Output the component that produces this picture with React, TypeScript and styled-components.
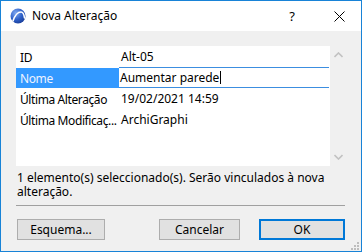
import React from "react"
import styled, { createGlobalStyle } from "styled-components"

/////////////////////////////////////////////////////////////////////////////

const GlobalStyle = createGlobalStyle`
  html, body {
    margin: 0;
    padding: 0;
    background: #ffffff;
  }
  * {
    box-sizing: border-box;
  }
`

const FONT = `"Noto Sans", "Liberation Sans", Arial, sans-serif`

interface RowData {
  label: string
  value: string
  editing?: boolean
}

const ROWS: RowData[] = [
  { label: "ID", value: "Alt-05" },
  { label: "Nome", value: "Aumentar parede", editing: true },
  { label: "Última Alteração", value: "19/02/2021 14:59" },
  { label: "Última Modificaç...", value: "ArchiGraphi" },
]

const AppLogo: React.FC = () => (
  <svg width="16" height="16" viewBox="0 0 16 16">
    <defs>
      <radialGradient id="lg" cx="35%" cy="30%" r="75%">
        <stop offset="0%" stopColor="#7fa8f0" />
        <stop offset="60%" stopColor="#2d5fc8" />
        <stop offset="100%" stopColor="#1b3f9a" />
      </radialGradient>
    </defs>
    <circle cx="8" cy="8" r="7.5" fill="url(#lg)" />
    <path d="M3 13 C5 7 8 4 11 4 C13 4 14 6 14.5 10" fill="none" stroke="#ffffff" strokeWidth="1.6" strokeLinecap="round" />
  </svg>
)

const CloseIcon: React.FC = () => (
  <svg width="11" height="11" viewBox="0 0 11 11">
    <path d="M0.5 0.5 L10.5 10.5 M10.5 0.5 L0.5 10.5" stroke="#000" strokeWidth="1" />
  </svg>
)

const Chevron: React.FC<{ down?: boolean }> = ({ down }) => (
  <svg width="9" height="6" viewBox="0 0 9 6">
    <path d={down ? "M0.5 1 L4.5 5 L8.5 1" : "M0.5 5 L4.5 1 L8.5 5"} fill="none" stroke="#c2c2c2" strokeWidth="1.6" />
  </svg>
)

const App: React.FC = () => {
  return (
    <>
      <GlobalStyle />
      <Window>
        <TitleBar>
          <LogoWrap>
            <AppLogo />
          </LogoWrap>
          <Title>Nova Alteração</Title>
          <HelpButton>?</HelpButton>
          <CloseButton>
            <CloseIcon />
          </CloseButton>
        </TitleBar>
        <Body>
          <Panel>
            <List>
              {ROWS.map((row) => (
                <Row key={row.label}>
                  <Label selected={row.editing}>{row.label}</Label>
                  {row.editing ? (
                    <EditCell>
                      {row.value}
                      <Caret />
                    </EditCell>
                  ) : (
                    <Value>{row.value}</Value>
                  )}
                </Row>
              ))}
            </List>
            <ScrollBar>
              <Chevron />
              <Chevron down />
            </ScrollBar>
          </Panel>
          <Message>
            <Line>1 elemento(s) seleccionado(s). Serão vinculados à nova</Line>
            <Line>alteração.</Line>
          </Message>
          <Separator />
          <ButtonRow>
            <Button width={88}>Esquema...</Button>
            <Spacer />
            <Button width={81}>Cancelar</Button>
            <Button width={86} primary>
              OK
            </Button>
          </ButtonRow>
          <Grip>
            <svg width="9" height="9" viewBox="0 0 9 9">
              {[
                [7, 1],
                [4, 4],
                [7, 4],
                [1, 7],
                [4, 7],
                [7, 7],
              ].map(([x, y]) => (
                <rect key={`${x}-${y}`} x={x} y={y} width="2" height="2" fill="#bdbdbd" />
              ))}
            </svg>
          </Grip>
        </Body>
      </Window>
    </>
  )
}

/////////////////////////////////////////////////////////////////////////////

const Window = styled.div`
  width: 362px;
  height: 252px;
  border: 1px solid #1883d7;
  display: flex;
  flex-direction: column;
  font-family: ${FONT};
  font-size: 12px;
  color: #000;
  overflow: hidden;
`

const TitleBar = styled.div`
  height: 30px;
  background: #ffffff;
  display: flex;
  align-items: center;
  flex-shrink: 0;
`

const LogoWrap = styled.div`
  width: 16px;
  height: 16px;
  margin-left: 9px;
  display: flex;
`

const Title = styled.div`
  margin-left: 6px;
  margin-top: -1px;
  font-size: 12px;
  flex: 1;
`

const HelpButton = styled.div`
  width: 46px;
  text-align: center;
  font-size: 13px;
  margin-top: -1px;
`

const CloseButton = styled.div`
  width: 46px;
  height: 30px;
  display: flex;
  align-items: center;
  justify-content: center;
  padding-left: 2px;
`

const Body = styled.div`
  flex: 1;
  background: #f0f0f0;
  padding: 15px 16px 0 15px;
  display: flex;
  flex-direction: column;
  position: relative;
`

const Panel = styled.div`
  height: 120px;
  display: flex;
  flex-shrink: 0;
`

const List = styled.div`
  width: 314px;
  background: #ffffff;
  display: flex;
  flex-direction: column;
`

const Row = styled.div`
  height: 21px;
  display: flex;
  align-items: stretch;
`

const Label = styled.div<{ selected?: boolean }>`
  width: 103px;
  padding-left: 4px;
  display: flex;
  align-items: center;
  white-space: nowrap;
  overflow: hidden;
  letter-spacing: -0.4px;
  margin-top: 1px;
  background: ${(p) => (p.selected ? "#3399ff" : "transparent")};
  color: ${(p) => (p.selected ? "#eef3ff" : "#000")};
`

const Value = styled.div`
  flex: 1;
  padding-left: 2px;
  display: flex;
  align-items: center;
  white-space: nowrap;
`

const EditCell = styled.div`
  flex: 1;
  margin-right: 1px;
  border-top: 1px solid #3c8ee0;
  border-bottom: 1px solid #3c8ee0;
  background: #ffffff;
  padding-left: 1px;
  display: flex;
  align-items: center;
  white-space: nowrap;
`

const Caret = styled.span`
  display: inline-block;
  width: 1px;
  height: 13px;
  background: #000;
  margin-left: 1px;
`

const ScrollBar = styled.div`
  width: 15px;
  display: flex;
  flex-direction: column;
  align-items: center;
  justify-content: space-between;
  padding: 6px 0 6px 2px;
`

const Message = styled.div`
  margin-top: 5px;
  padding-left: 1px;
  display: flex;
  flex-direction: column;
`

const Line = styled.div`
  height: 14px;
  line-height: 14px;
  white-space: nowrap;
`

const Separator = styled.div`
  margin-top: 6px;
  height: 1px;
  background: #a0a0a0;
  flex-shrink: 0;
`

const ButtonRow = styled.div`
  margin-top: 13px;
  display: flex;
  gap: 19px;
  padding-left: 1px;
`

const Spacer = styled.div`
  flex: 1;
`

const Button = styled.div<{ width: number; primary?: boolean }>`
  width: ${(p) => p.width}px;
  height: 21px;
  background: #e1e1e1;
  border: ${(p) => (p.primary ? "2px solid #0078d7" : "1px solid #adadad")};
  display: flex;
  align-items: center;
  justify-content: center;
`

const Grip = styled.div`
  position: absolute;
  right: 2px;
  bottom: 1px;
  display: flex;
`

export default App
